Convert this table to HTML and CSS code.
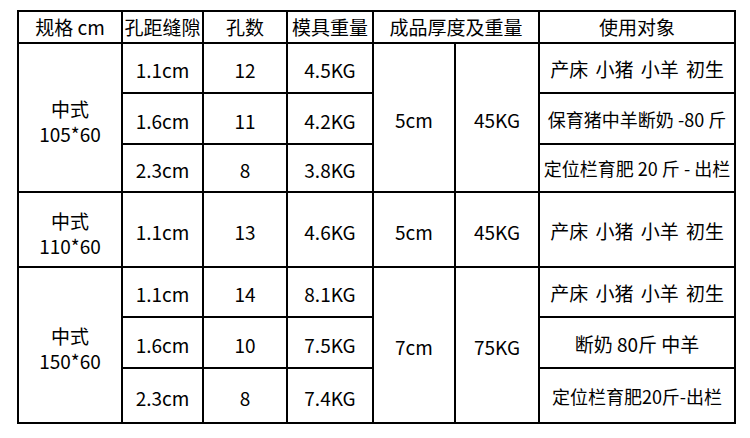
FILE: index.html
```html
<!DOCTYPE html>
<html lang="zh">
<head>
<meta charset="utf-8">
<title>规格表</title>
<link rel="stylesheet" href="styles.css">
</head>
<body>
<table class="spec">
  <colgroup>
    <col class="c1"><col class="c2"><col class="c3"><col class="c4"><col class="c5"><col class="c6"><col class="c7">
  </colgroup>
  <thead>
    <tr class="r-head">
      <th>规格 cm</th>
      <th>孔距缝隙</th>
      <th>孔数</th>
      <th>模具重量</th>
      <th colspan="2">成品厚度及重量</th>
      <th>使用对象</th>
    </tr>
  </thead>
  <tbody>
    <tr class="r-a">
      <td rowspan="3" class="size">中式<br>105*60</td>
      <td>1.1cm</td><td>12</td><td>4.5KG</td>
      <td rowspan="3">5cm</td><td rowspan="3">45KG</td>
      <td class="use spaced">产床 小猪 小羊 初生</td>
    </tr>
    <tr class="r-b">
      <td>1.6cm</td><td>11</td><td>4.2KG</td>
      <td class="use">保育猪中羊断奶 -80 斤</td>
    </tr>
    <tr class="r-c">
      <td>2.3cm</td><td>8</td><td>3.8KG</td>
      <td class="use">定位栏育肥 20 斤 - 出栏</td>
    </tr>
    <tr class="r-d">
      <td class="size">中式<br>110*60</td>
      <td>1.1cm</td><td>13</td><td>4.6KG</td>
      <td>5cm</td><td>45KG</td>
      <td class="use spaced">产床 小猪 小羊 初生</td>
    </tr>
    <tr class="r-a">
      <td rowspan="3" class="size">中式<br>150*60</td>
      <td>1.1cm</td><td>14</td><td>8.1KG</td>
      <td rowspan="3">7cm</td><td rowspan="3">75KG</td>
      <td class="use spaced">产床 小猪 小羊 初生</td>
    </tr>
    <tr class="r-b">
      <td>1.6cm</td><td>10</td><td>7.5KG</td>
      <td class="use big">断奶 80斤 中羊</td>
    </tr>
    <tr class="r-e">
      <td>2.3cm</td><td>8</td><td>7.4KG</td>
      <td class="use">定位栏育肥20斤-出栏</td>
    </tr>
  </tbody>
</table>
</body>
</html>
```
FILE: styles.css
```css
html, body {
  margin: 0;
  padding: 0;
  background: #ffffff;
}

body {
  padding: 10px 0 0 17px;
  font-family: "Noto Sans CJK SC", "Noto Sans", sans-serif;
  color: #000;
}

.spec {
  border-collapse: collapse;
  table-layout: fixed;
  width: 717px;
}

.c1 { width: 104px; }
.c2 { width: 81px; }
.c3 { width: 84px; }
.c4 { width: 86px; }
.c5 { width: 82px; }
.c6 { width: 84px; }
.c7 { width: 196px; }

.spec th,
.spec td {
  border: 2px solid #000;
  padding: 0;
  text-align: center;
  vertical-align: middle;
  white-space: nowrap;
  overflow: hidden;
  font-weight: normal;
}

.spec th {
  font-size: 19px;
  line-height: 22px;
}

.spec td {
  font-size: 19px;
  line-height: 25px;
  padding-top: 3px;
}

.spec td.size {
  padding-top: 6px;
}

.spec td.use {
  font-size: 18px;
  padding-top: 1px;
}

.spec td.spaced {
  font-size: 19px;
  word-spacing: 3px;
}

.spec td.big {
  font-size: 19px;
}

.r-head { height: 32px; }
.r-a { height: 50px; }
.r-b { height: 51px; }
.r-c { height: 48px; }
.r-d { height: 75px; }
.r-e { height: 55px; }
```
